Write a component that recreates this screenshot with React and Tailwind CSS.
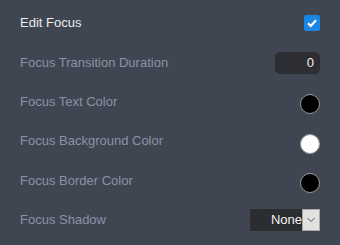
import React from "react";

function Row({ label, children, first }) {
  return (
    <div className={(first ? "h-[41px]" : "h-[39.25px]") + " flex items-center justify-between"}>
      <span className={first ? "text-[13px] text-[#ececec]" : "text-[13px] text-[#8a93a4]"}>{label}</span>
      {children}
    </div>
  );
}

function Swatch({ color }) {
  return (
    <div
      className={
        "mt-[5px] h-5 w-5 rounded-full border border-[#9a9a9a] " +
        (color === "white" ? "bg-white" : "bg-black")
      }
    />
  );
}

export default function App() {
  return (
    <div
      className="h-[245px] w-[340px] bg-[#404552] px-5 pt-[2px]"
      style={{ fontFamily: '"Liberation Sans", Arial, sans-serif' }}
    >
      <Row label="Edit Focus" first>
        <div className="flex h-4 w-4 items-center justify-center rounded-[2px] bg-[#1a86e2]">
          <svg width="12" height="12" viewBox="0 0 12 12">
            <path d="M2 6.2 L4.8 9 L10 3.2" fill="none" stroke="white" strokeWidth="2.2" />
          </svg>
        </div>
      </Row>
      <Row label="Focus Transition Duration">
        <div className="flex h-[22px] w-[45px] items-center justify-end rounded-[5px] bg-[#2c2e33] pr-[6px] text-[13px] text-[#f0f0f0]">
          0
        </div>
      </Row>
      <Row label="Focus Text Color">
        <Swatch color="black" />
      </Row>
      <Row label="Focus Background Color">
        <Swatch color="white" />
      </Row>
      <Row label="Focus Border Color">
        <Swatch color="black" />
      </Row>
      <Row label="Focus Shadow">
        <div className="flex h-[22px] w-[70px] items-stretch bg-[#2b2d31]">
          <div className="flex flex-1 items-center justify-end text-[13px] text-[#f2f2f2]">None</div>
          <div className="flex w-[18px] items-center justify-center border border-[#a8a8a8] bg-[#e1e1e1]">
            <svg width="10" height="6" viewBox="0 0 10 6">
              <path d="M1.5 1 L5 4.5 L8.5 1" fill="none" stroke="#555" strokeWidth="1" />
            </svg>
          </div>
        </div>
      </Row>
    </div>
  );
}
